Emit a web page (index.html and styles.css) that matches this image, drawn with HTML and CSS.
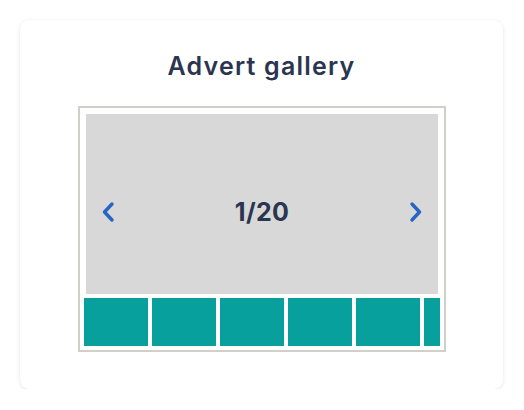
FILE: index.html
```html
<!DOCTYPE html>
<html>
<head>
<meta charset="utf-8">
<link rel="stylesheet" href="styles.css">
</head>
<body>
<div class="card">
  <h2 class="title">Advert gallery</h2>
  <div class="gallery">
    <div class="stage">
      <button class="nav" aria-label="Previous">
        <svg width="14" height="22" viewBox="0 0 14 22"><path d="M11 3 L3.5 11 L11 19" fill="none" stroke="#2864c2" stroke-width="3.4" stroke-linecap="round" stroke-linejoin="round"/></svg>
      </button>
      <span class="counter">1/20</span>
      <button class="nav" aria-label="Next">
        <svg width="14" height="22" viewBox="0 0 14 22"><path d="M3 3 L10.5 11 L3 19" fill="none" stroke="#2864c2" stroke-width="3.4" stroke-linecap="round" stroke-linejoin="round"/></svg>
      </button>
    </div>
    <div class="thumbs">
      <div class="thumb"></div>
      <div class="thumb"></div>
      <div class="thumb"></div>
      <div class="thumb"></div>
      <div class="thumb"></div>
      <div class="thumb"></div>
      <div class="thumb"></div>
    </div>
  </div>
</div>
</body>
</html>
```
FILE: styles.css
```css
html, body {
  margin: 0;
  background: #ffffff;
}
body {
  padding: 20px 21px 0 20px;
  font-family: Inter, "Noto Sans", sans-serif;
}
.card {
  width: 483px;
  height: 369px;
  box-sizing: border-box;
  background: #ffffff;
  border-radius: 9px;
  box-shadow: 0 1px 4px rgba(0, 0, 0, 0.10), 0 0 1px rgba(0, 0, 0, 0.05);
  padding-top: 30px;
}
.title {
  margin: 0 0 24px;
  font-size: 25px;
  line-height: 32px;
  font-weight: 600;
  color: #2b3550;
  text-align: center;
  letter-spacing: 1.2px;
}
.gallery {
  width: 368px;
  box-sizing: border-box;
  margin: 0 auto;
  border: 2px solid #cfd0c9;
  padding: 4px;
  background: #ffffff;
}
.stage {
  margin: 2px 2px 0;
  height: 180px;
  box-sizing: border-box;
  background: #d8d8d8;
  display: flex;
  align-items: center;
  justify-content: space-between;
  padding: 16px 14px 0 15px;
}
.nav {
  background: none;
  border: 0;
  padding: 0;
  display: flex;
}
.counter {
  font-size: 25px;
  font-weight: 700;
  color: #2b3550;
  letter-spacing: 0.3px;
}
.thumbs {
  margin-top: 4px;
  display: flex;
  gap: 4px;
  overflow: hidden;
}
.thumb {
  flex: 0 0 64px;
  height: 48px;
  background: #08a09c;
}
```
